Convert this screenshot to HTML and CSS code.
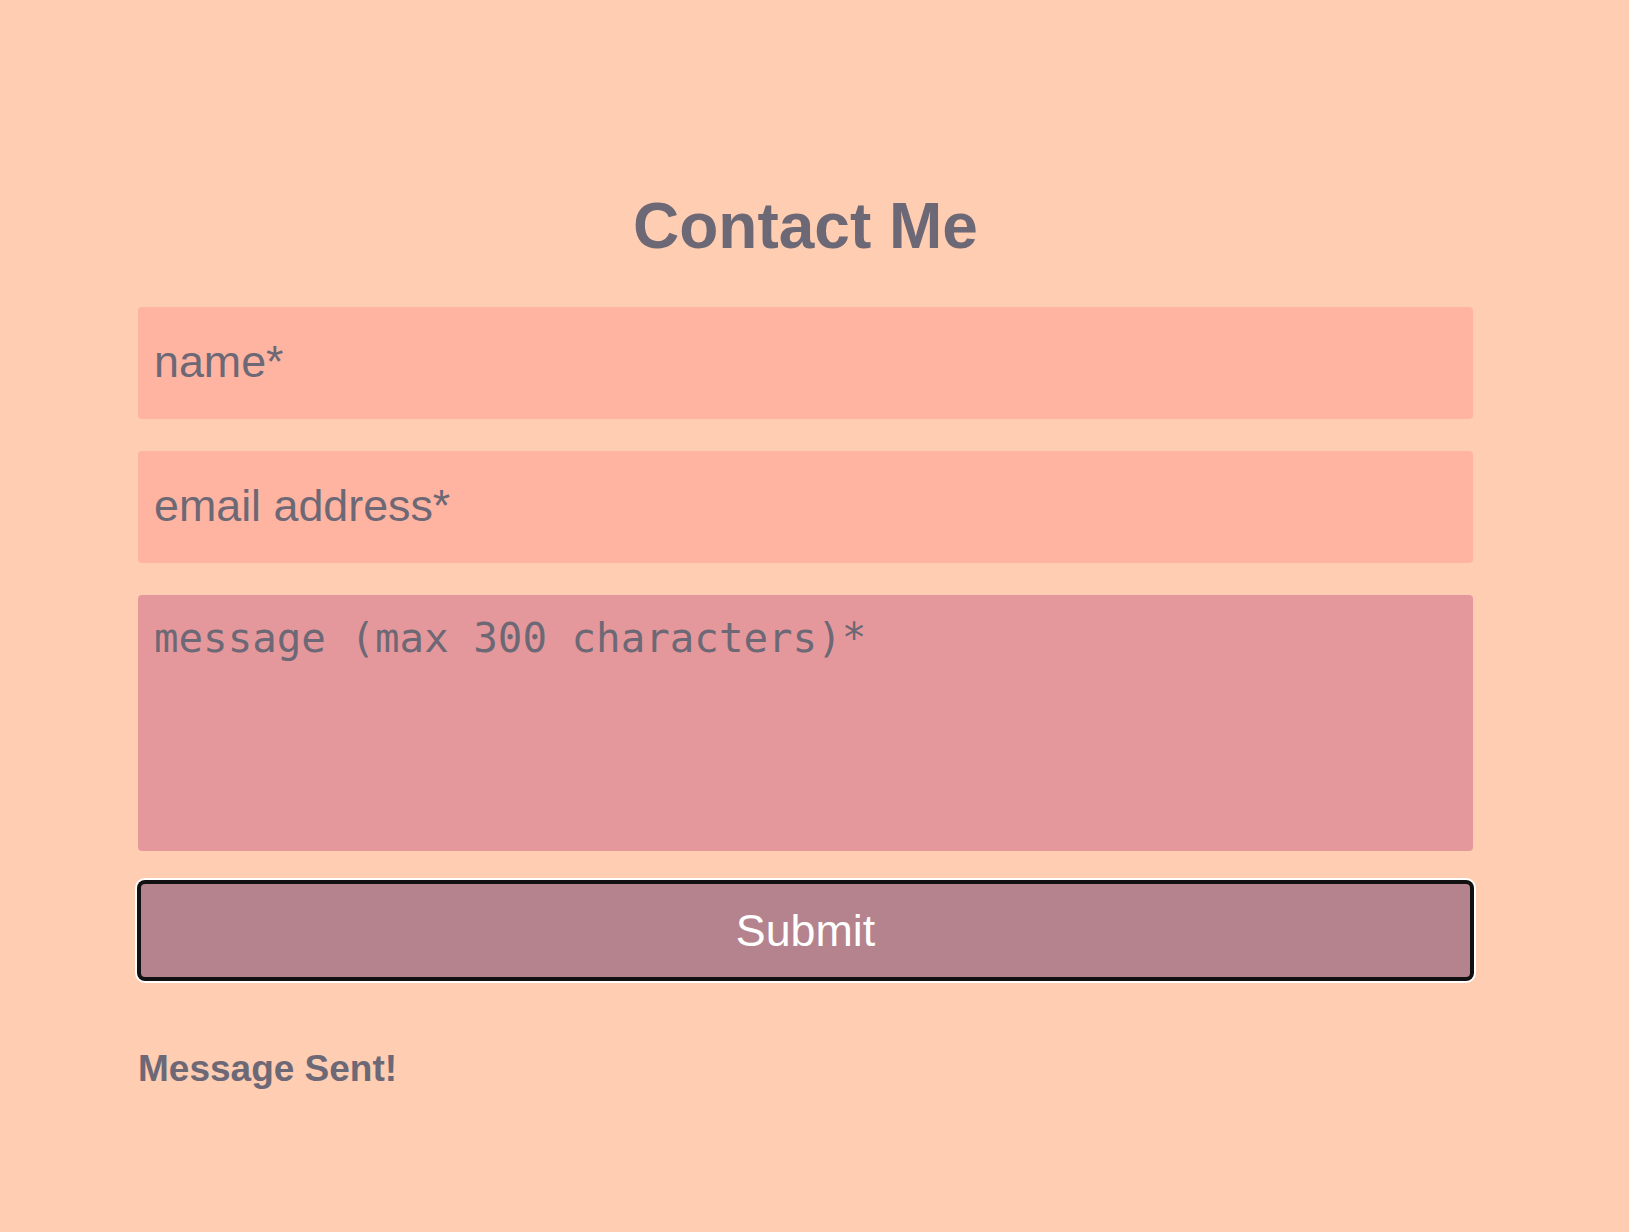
FILE: index.html
```html
<!DOCTYPE html>
<html lang="en">
<head>
<meta charset="utf-8">
<title>Contact Me</title>
<link rel="stylesheet" href="styles.css">
</head>
<body>
<main class="contact">
  <h1 class="contact-title">Contact Me</h1>
  <form class="contact-form">
    <input class="field field-input" type="text" placeholder="name*">
    <input class="field field-input" type="email" placeholder="email address*">
    <textarea class="field field-message" placeholder="message (max 300 characters)*"></textarea>
    <button class="submit-btn" type="button">Submit</button>
  </form>
  <p class="status">Message Sent!</p>
</main>
</body>
</html>
```

FILE: styles.css
```css
html, body {
  margin: 0;
  padding: 0;
  background: #ffcdb2;
}

body {
  font-family: "Liberation Sans", Arial, sans-serif;
  color: #6d6875;
  min-height: 1232px;
}

.contact {
  width: 1335px;
  margin-left: 138px;
  padding-top: 189px;
}

.contact-title {
  margin: 0;
  font-size: 64px;
  line-height: 74px;
  font-weight: 700;
  text-align: center;
  color: #6d6875;
}

.contact-form {
  margin-top: 44px;
  display: flex;
  flex-direction: column;
  gap: 32px;
}

.field {
  box-sizing: border-box;
  width: 100%;
  border: none;
  border-radius: 4px;
  margin: 0;
  color: #6d6875;
  outline: none;
}

.field::placeholder {
  color: #6d6875;
  opacity: 1;
}

.field-input {
  height: 112px;
  padding: 0 16px 3px;
  background: #ffb4a2;
  font-family: "Liberation Sans", Arial, sans-serif;
  font-size: 44.8px;
}

.field-message {
  height: 256px;
  padding: 19px 16px 0;
  background: #e5989b;
  font-family: "DejaVu Sans Mono", "Liberation Mono", monospace;
  font-size: 40.8px;
  line-height: 48px;
  resize: none;
  display: block;
}

.submit-btn {
  box-sizing: border-box;
  width: 100%;
  height: 99px;
  margin-top: -2px;
  border: 3px solid #111111;
  border-radius: 7px;
  background: #b5838d;
  color: #ffffff;
  font-family: "Liberation Sans", Arial, sans-serif;
  font-size: 44.8px;
  cursor: pointer;
  box-shadow: 0 0 0 1px #111111, 0 0 0 3px #ffffff;
}

.status {
  margin: 68px 0 0;
  font-size: 37px;
  font-weight: 700;
  line-height: normal;
  color: #6d6875;
}
```
